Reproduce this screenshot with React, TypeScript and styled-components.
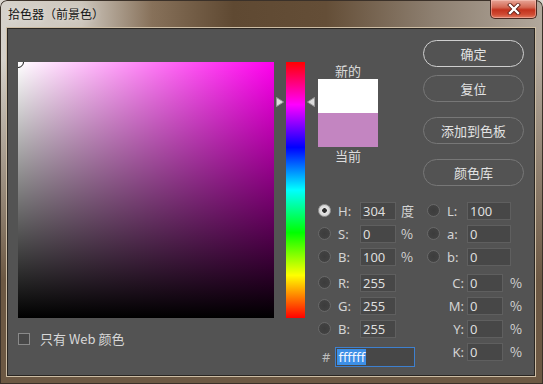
import React from "react";
import styled, { createGlobalStyle } from "styled-components";

const UI = `"Noto Sans", "Noto Sans CJK SC", sans-serif`;
const CJK = `"Noto Sans CJK SC", "Noto Sans", sans-serif`;

const Global = createGlobalStyle`
  html, body { margin: 0; padding: 0; background: #d9d5ce; }
  body { width: 543px; height: 384px; overflow: hidden; }
`;

const Window = styled.div`
  width: 543px;
  height: 384px;
  box-sizing: border-box;
  display: flex;
  flex-direction: column;
  padding: 0 9px 9px 8px;
  border-radius: 7px 7px 0 0;
  background:
    linear-gradient(to bottom, rgba(108, 88, 67, 0) 0px, rgba(108, 88, 67, 0) 60px, rgba(108, 88, 67, 1) 280px),
    linear-gradient(to right, #d6d2cb 0%, #cdc6bc 15%, #87715a 28%, #5f4932 43%, #644e37 60%, #8e8071 80%, #b2a89c 100%);
  box-shadow: inset 0 0 0 1px #3b3129;
`;

const TitleBar = styled.div`
  height: 29px;
  flex: none;
  display: flex;
  align-items: flex-start;
`;

const Title = styled.div`
  margin-top: 6px;
  font-family: ${CJK};
  font-size: 12px;
  line-height: 16px;
  color: #141414;
  text-shadow: 0 0 6px rgba(255, 255, 255, 0.6);
`;

const CloseButton = styled.div`
  margin-left: auto;
  margin-right: -3px;
  width: 47px;
  height: 19px;
  box-sizing: border-box;
  border: 1px solid #4a2a22;
  border-top: none;
  border-radius: 0 0 5px 5px;
  background: linear-gradient(to bottom, #e7a597 0%, #d46a55 40%, #c3321d 55%, #cf4a32 80%, #e07a5f 100%);
  box-shadow: inset 0 0 0 1px rgba(255, 210, 200, 0.45);
  display: flex;
  align-items: center;
  justify-content: center;
`;

const Client = styled.div`
  flex: 1;
  background: #535353;
  box-shadow: 0 0 0 1px #2a2622, 0 0 0 2px #cdbda4;
  display: flex;
  align-items: flex-start;
  color: #d6d6d6;
  font-family: ${UI};
`;

const LeftPane = styled.div`
  margin: 33px 0 0 10px;
  display: flex;
  flex-direction: column;
`;

const PickerRow = styled.div`
  display: flex;
`;

const ColorField = styled.div`
  position: relative;
  width: 256px;
  height: 256px;
  overflow: hidden;
  background:
    linear-gradient(to top, #000 0%, rgba(0, 0, 0, 0) 100%),
    linear-gradient(to right, #fff 0%, #ff00ee 100%);
`;

const Marker = styled.div`
  position: absolute;
  left: -6px;
  top: -6px;
  width: 10px;
  height: 10px;
  border-radius: 50%;
  border: 1px solid #1a1a1a;
  box-shadow: inset 0 0 0 1px rgba(255, 255, 255, 0.7);
`;

const HueWrap = styled.div`
  position: relative;
  margin-left: 12px;
  width: 19px;
  height: 256px;
`;

const HueBar = styled.div`
  width: 100%;
  height: 100%;
  background: linear-gradient(to bottom, #f00 0%, #f0f 16.67%, #00f 33.33%, #0ff 50%, #0f0 66.67%, #ff0 83.33%, #f00 100%);
`;

const SliderArrow = styled.svg<{ $side: "left" | "right" }>`
  position: absolute;
  width: 8px;
  height: 10px;
  left: ${(p) => (p.$side === "left" ? "-10px" : "21px")};
`;

const CheckRow = styled.label`
  margin-top: 11px;
  display: flex;
  align-items: center;
  gap: 10px;
  font-family: ${CJK};
  font-size: 13px;
  color: #d8d8d8;
`;

const CheckBox = styled.span`
  width: 12px;
  height: 12px;
  box-sizing: border-box;
  border: 1px solid #8a8a8a;
  background: #484848;
`;

const RightPane = styled.div`
  margin-left: 13px;
  padding-top: 11px;
  display: flex;
  flex-direction: column;
`;

const TopRow = styled.div`
  display: flex;
  align-items: flex-start;
`;

const SwatchCol = styled.div`
  width: 60px;
  margin-top: 22px;
  display: flex;
  flex-direction: column;
  align-items: center;
`;

const SwatchLabel = styled.div`
  height: 17px;
  line-height: 17px;
  font-family: ${CJK};
  font-size: 13px;
  color: #dcdcdc;
`;

const Swatch = styled.div<{ $color: string }>`
  width: 60px;
  height: 34px;
  background: ${(p) => p.$color};
`;

const ButtonCol = styled.div`
  margin-left: 45px;
  display: flex;
  flex-direction: column;
`;

const Button = styled.div<{ $primary?: boolean; $gap: number }>`
  margin-top: ${(p) => p.$gap}px;
  width: 101px;
  height: 27px;
  box-sizing: border-box;
  border-radius: 14px;
  border: 1px solid ${(p) => (p.$primary ? "#cfcfcf" : "#777777")};
  display: flex;
  align-items: center;
  justify-content: center;
  font-family: ${CJK};
  font-size: 13px;
  color: #e2e2e2;
`;

const Grid = styled.div<{ $top: number }>`
  margin-top: ${(p) => p.$top}px;
  display: grid;
  grid-template-columns: 20px 22px 36px 31px 20px 20px 36px 22px;
  grid-auto-rows: 23px;
  align-items: center;
  font-size: 13px;
`;

const Radio = styled.span<{ $on?: boolean }>`
  width: 13px;
  height: 13px;
  box-sizing: border-box;
  border-radius: 50%;
  border: 1px solid ${(p) => (p.$on ? "#9a9a9a" : "#686868")};
  background: ${(p) =>
    p.$on
      ? "radial-gradient(circle, #2e2e2e 0, #2e2e2e 2px, #e6e6e6 2.6px, #c8c8c8 100%)"
      : "radial-gradient(circle, #3c3c3c 0, #414141 60%, #4a4a4a 100%)"};
`;

const Label = styled.span<{ $right?: boolean }>`
  font-family: ${UI};
  color: #d4d4d4;
  text-align: ${(p) => (p.$right ? "right" : "left")};
  padding-right: ${(p) => (p.$right ? "3px" : "0")};
`;

const Value = styled.span<{ $wide?: boolean }>`
  grid-column: ${(p) => (p.$wide ? "span 2" : "span 1")};
  width: ${(p) => (p.$wide ? "44px" : "36px")};
  height: 18px;
  box-sizing: border-box;
  border: 1px solid #5f5f5f;
  background: #474747;
  padding-left: 2px;
  line-height: 16px;
  font-family: ${UI};
  color: #dedede;
`;

const Unit = styled.span<{ $pad: number }>`
  padding-left: ${(p) => p.$pad}px;
  font-family: ${CJK};
  color: #d4d4d4;
`;

const Empty = styled.span``;

const HexCell = styled.div`
  grid-column: span 4;
  align-self: start;
  padding: 7px 0 0 4px;
  display: flex;
  align-items: center;
  gap: 5px;
`;

const Hash = styled.span`
  color: #bdbdbd;
  font-family: ${UI};
`;

const HexBox = styled.span`
  width: 80px;
  height: 20px;
  box-sizing: border-box;
  border: 1px solid #3e80cf;
  background: #474747;
  padding: 1px;
  display: flex;
  align-items: stretch;
`;

const Selected = styled.span`
  background: #3d8fe6;
  color: #f2f6ff;
  padding: 0 1px;
  line-height: 16px;
  font-family: ${UI};
`;

type Row = {
  l1: string;
  v1: string;
  u1?: string;
  on?: boolean;
  l2: string;
  v2: string;
};

const hsbLab: Row[] = [
  { l1: "H:", v1: "304", u1: "度", on: true, l2: "L:", v2: "100" },
  { l1: "S:", v1: "0", u1: "%", l2: "a:", v2: "0" },
  { l1: "B:", v1: "100", u1: "%", l2: "b:", v2: "0" },
];

const rgbCmyk = [
  { l1: "R:", v1: "255", l2: "C:", v2: "0" },
  { l1: "G:", v1: "255", l2: "M:", v2: "0" },
  { l1: "B:", v1: "255", l2: "Y:", v2: "0" },
];

const HUE = 304;

export default function App() {
  const arrowTop = ((360 - HUE) / 360) * 256 - 5;
  return (
    <>
      <Global />
      <Window>
        <TitleBar>
          <Title>拾色器（前景色）</Title>
          <CloseButton>
            <svg width="14" height="12" viewBox="0 0 14 12">
              <path d="M3 2 L11 10 M11 2 L3 10" stroke="#5a1a10" strokeWidth="4" strokeLinecap="square" />
              <path d="M3 2 L11 10 M11 2 L3 10" stroke="#ffffff" strokeWidth="2.4" strokeLinecap="square" />
            </svg>
          </CloseButton>
        </TitleBar>
        <Client>
          <LeftPane>
            <PickerRow>
              <ColorField>
                <Marker />
              </ColorField>
              <HueWrap>
                <HueBar />
                <SliderArrow $side="left" viewBox="0 0 8 10" style={{ top: arrowTop }}>
                  <path d="M0.5 0.5 L7.5 5 L0.5 9.5 Z" fill="#dcdcdc" stroke="#9a9a9a" strokeWidth="1" />
                </SliderArrow>
                <SliderArrow $side="right" viewBox="0 0 8 10" style={{ top: arrowTop }}>
                  <path d="M7.5 0.5 L0.5 5 L7.5 9.5 Z" fill="#dcdcdc" stroke="#9a9a9a" strokeWidth="1" />
                </SliderArrow>
              </HueWrap>
            </PickerRow>
            <CheckRow>
              <CheckBox />
              <span>只有 Web 颜色</span>
            </CheckRow>
          </LeftPane>
          <RightPane>
            <TopRow>
              <SwatchCol>
                <SwatchLabel>新的</SwatchLabel>
                <Swatch $color="#ffffff" />
                <Swatch $color="#c385c1" />
                <SwatchLabel>当前</SwatchLabel>
              </SwatchCol>
              <ButtonCol>
                <Button $primary $gap={0}>确定</Button>
                <Button $gap={8}>复位</Button>
                <Button $gap={15}>添加到色板</Button>
                <Button $gap={15}>颜色库</Button>
              </ButtonCol>
            </TopRow>
            <Grid $top={13}>
              {hsbLab.map((r) => (
                <React.Fragment key={r.l1 + r.l2}>
                  <Radio $on={r.on} />
                  <Label>{r.l1}</Label>
                  <Value>{r.v1}</Value>
                  <Unit $pad={5}>{r.u1}</Unit>
                  <Radio />
                  <Label>{r.l2}</Label>
                  <Value $wide>{r.v2}</Value>
                </React.Fragment>
              ))}
            </Grid>
            <Grid $top={3}>
              {rgbCmyk.map((r) => (
                <React.Fragment key={r.l1 + r.l2}>
                  <Radio />
                  <Label>{r.l1}</Label>
                  <Value>{r.v1}</Value>
                  <Empty />
                  <Empty />
                  <Label $right>{r.l2}</Label>
                  <Value>{r.v2}</Value>
                  <Unit $pad={7}>%</Unit>
                </React.Fragment>
              ))}
              <HexCell>
                <Hash>#</Hash>
                <HexBox>
                  <Selected>ffffff</Selected>
                </HexBox>
              </HexCell>
              <Empty />
              <Label $right>K:</Label>
              <Value>0</Value>
              <Unit $pad={7}>%</Unit>
            </Grid>
          </RightPane>
        </Client>
      </Window>
    </>
  );
}
